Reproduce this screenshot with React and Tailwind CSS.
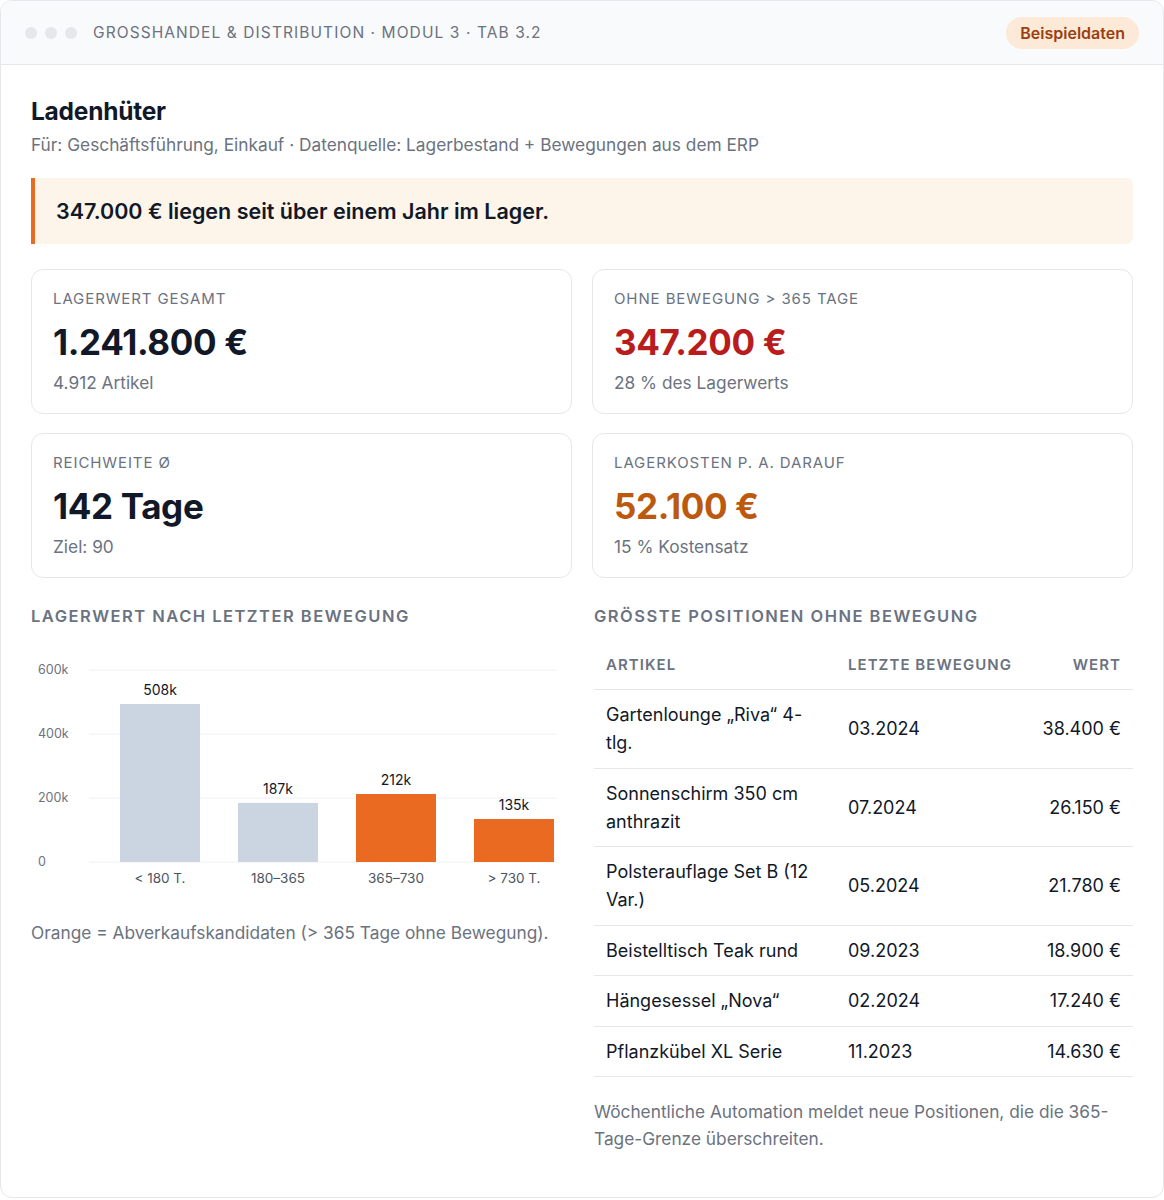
const kpis = [
  { label: "Lagerwert gesamt", value: "1.241.800 €", sub: "4.912 Artikel", color: "text-[#111827]" },
  { label: "Ohne Bewegung > 365 Tage", value: "347.200 €", sub: "28 % des Lagerwerts", color: "text-[#b91c1c]" },
  { label: "Reichweite Ø", value: "142 Tage", sub: "Ziel: 90", color: "text-[#111827]" },
  { label: "Lagerkosten p. a. darauf", value: "52.100 €", sub: "15 % Kostensatz", color: "text-[#bb5a0f]" },
];

const bars = [
  { label: "< 180 T.", value: "508k", top: 58, hot: false },
  { label: "180–365", value: "187k", top: 157, hot: false },
  { label: "365–730", value: "212k", top: 148, hot: true },
  { label: "> 730 T.", value: "135k", top: 173, hot: true },
];

const rows = [
  ["Gartenlounge „Riva“ 4-tlg.", "03.2024", "38.400 €"],
  ["Sonnenschirm 350 cm anthrazit", "07.2024", "26.150 €"],
  ["Polsterauflage Set B (12 Var.)", "05.2024", "21.780 €"],
  ["Beistelltisch Teak rund", "09.2023", "18.900 €"],
  ["Hängesessel „Nova“", "02.2024", "17.240 €"],
  ["Pflanzkübel XL Serie", "11.2023", "14.630 €"],
];

function Chart() {
  const grid = [
    { y: 24, t: "600k" },
    { y: 88, t: "400k" },
    { y: 152, t: "200k" },
    { y: 216, t: "0" },
  ];
  return (
    <svg width="539" height="250" viewBox="0 0 539 250" className="mt-[19px] block">
      {grid.map((g) => (
        <g key={g.t}>
          <line x1="58" x2="525" y1={g.y} y2={g.y} stroke="#eef0f3" strokeWidth="1" />
          <text x="7" y={g.y + 4} fontSize="12.5" fill="#6b7280">{g.t}</text>
        </g>
      ))}
      {bars.map((b, i) => {
        const x = 89 + i * 118;
        return (
          <g key={b.label}>
            <rect x={x} y={b.top} width="80" height={216 - b.top} fill={b.hot ? "#ea6a22" : "#cbd5e1"} />
            <text x={x + 40} y={b.top - 9} fontSize="14" fill="#111827" textAnchor="middle">{b.value}</text>
            <text x={x + 40} y={237} fontSize="13.5" fill="#4b5563" textAnchor="middle">{b.label}</text>
          </g>
        );
      })}
    </svg>
  );
}

export default function App() {
  return (
    <div className="w-[1164px] h-[1200px] bg-white" style={{ fontFamily: "Inter, 'Noto Sans', sans-serif" }}>
      <div className="h-[1198px] border border-[#e5e7eb] rounded-xl overflow-hidden flex flex-col">
        {/* window bar */}
        <div className="h-16 shrink-0 bg-[#f9fafb] border-b border-[#e5e7eb] flex items-center pl-[24px] pr-[24px]">
          <div className="flex gap-2">
            <span className="w-3 h-3 rounded-full bg-[#e5e7eb]" />
            <span className="w-3 h-3 rounded-full bg-[#e5e7eb]" />
            <span className="w-3 h-3 rounded-full bg-[#e5e7eb]" />
          </div>
          <div className="ml-[16px] text-[15.5px] tracking-[0.07em] text-[#6b7280] uppercase">
            Grosshandel &amp; Distribution · Modul 3 · Tab 3.2
          </div>
          <div className="ml-auto rounded-full bg-[#fde9d7] text-[#9a3f0f] font-semibold text-[16px] px-[14px] h-8 flex items-center">
            Beispieldaten
          </div>
        </div>

        <div className="px-[30px] pt-[30px]">
          <h1 className="text-[24.5px] leading-8 font-bold text-[#111827] tracking-[-0.01em]">Ladenhüter</h1>
          <p className="mt-[5px] text-[17.3px] leading-[26px] text-[#6b7280]">
            Für: Geschäftsführung, Einkauf · Datenquelle: Lagerbestand + Bewegungen aus dem ERP
          </p>

          <div className="mt-[20px] border-l-4 border-[#ea6a22] bg-[#fdf5ea] rounded-r-md pl-[21px] py-[19px] text-[21.5px] leading-7 font-semibold text-[#111827]">
            347.000 € liegen seit über einem Jahr im Lager.
          </div>

          <div className="mt-[25px] grid grid-cols-2 gap-x-5 gap-y-[19px]">
            {kpis.map((k) => (
              <div key={k.label} className="border border-[#e5e7eb] rounded-xl px-[21px] pt-[19px] pb-[17px]">
                <div className="text-[15px] leading-5 uppercase tracking-[0.06em] text-[#6b7280]">{k.label}</div>
                <div className={`mt-[11px] text-[35px] leading-[44px] font-bold tracking-[-0.01em] ${k.color}`}>{k.value}</div>
                <div className="mt-[6px] text-[17.3px] leading-[26px] text-[#6b7280]">{k.sub}</div>
              </div>
            ))}
          </div>

          <div className="mt-[27px] grid grid-cols-2 gap-6">
            <div>
              <h2 className="text-[16.5px] leading-[22px] font-semibold uppercase tracking-[0.09em] text-[#6b7280]">
                Lagerwert nach letzter Bewegung
              </h2>
              <Chart />
              <p className="mt-[24px] text-[17.3px] leading-[26px] text-[#6b7280]">
                Orange = Abverkaufskandidaten (&gt; 365 Tage ohne Bewegung).
              </p>
            </div>

            <div>
              <h2 className="text-[16.5px] leading-[22px] font-semibold uppercase tracking-[0.09em] text-[#6b7280]">
                Grösste Positionen ohne Bewegung
              </h2>
              <table className="mt-4 w-full table-fixed border-collapse">
                <colgroup>
                  <col className="w-[242px]" />
                  <col className="w-[193px]" />
                  <col />
                </colgroup>
                <thead>
                  <tr className="border-b border-[#e5e7eb]">
                    <th className="text-left px-3 pt-3 pb-[14px] text-[15px] leading-5 font-semibold uppercase tracking-[0.07em] text-[#6b7280]">Artikel</th>
                    <th className="text-left px-3 pt-3 pb-[14px] text-[15px] leading-5 font-semibold uppercase tracking-[0.07em] text-[#6b7280]">Letzte Bewegung</th>
                    <th className="text-right px-3 pt-3 pb-[14px] text-[15px] leading-5 font-semibold uppercase tracking-[0.07em] text-[#6b7280]">Wert</th>
                  </tr>
                </thead>
                <tbody>
                  {rows.map((r) => (
                    <tr key={r[0]} className="border-b border-[#e5e7eb] text-[18px] leading-7 text-[#111827]">
                      <td className="px-3 pt-[11px] pb-[10.5px] align-middle">{r[0]}</td>
                      <td className="px-3 pt-[11px] pb-[10.5px] align-middle">{r[1]}</td>
                      <td className="px-3 pt-[11px] pb-[10.5px] align-middle text-right whitespace-nowrap">{r[2]}</td>
                    </tr>
                  ))}
                </tbody>
              </table>
              <p className="mt-[21px] text-[17.3px] leading-[27px] text-[#6b7280]">
                Wöchentliche Automation meldet neue Positionen, die die 365-Tage-Grenze überschreiten.
              </p>
            </div>
          </div>
        </div>
      </div>
    </div>
  );
}
